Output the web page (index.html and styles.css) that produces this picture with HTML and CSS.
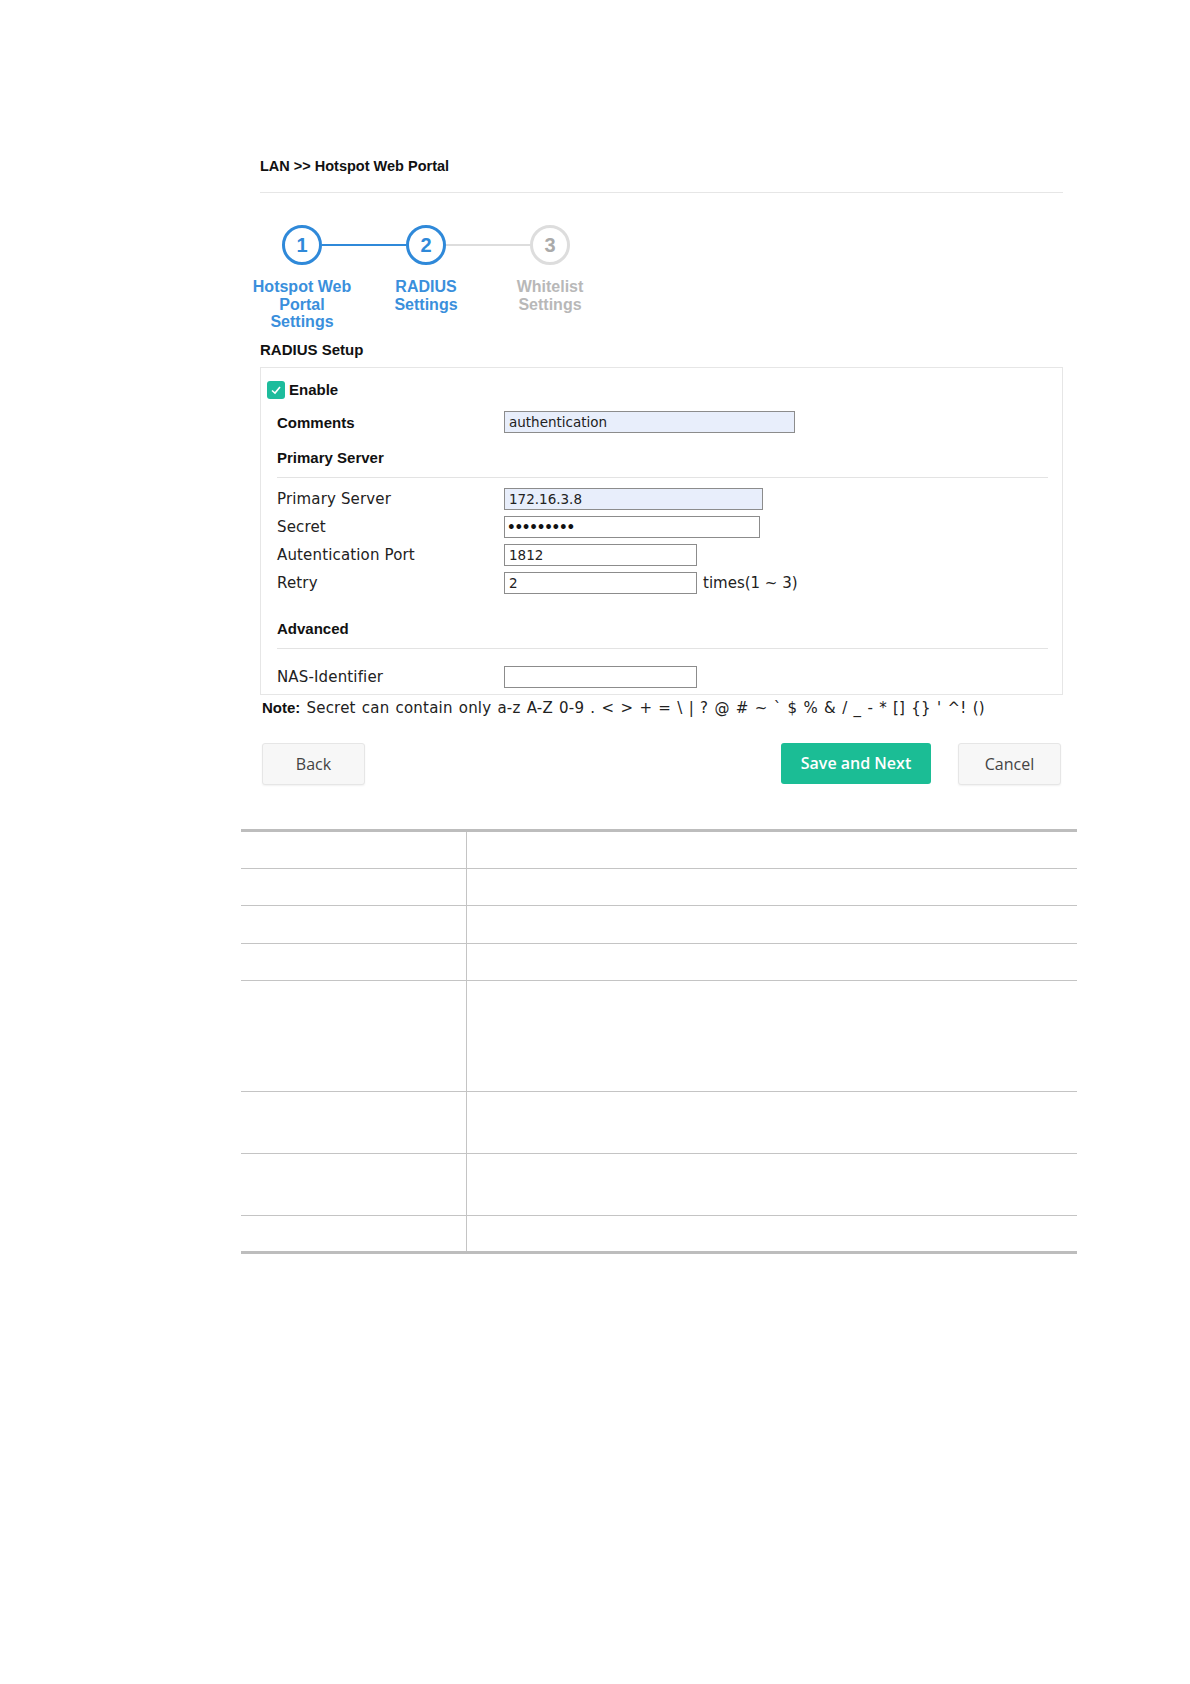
FILE: index.html
```html
<!DOCTYPE html>
<html lang="en">

<head>
    <meta charset="UTF-8">
    <meta name="viewport" content="width=device-width, initial-scale=1.0">
    <title>LAN &gt;&gt; Hotspot Web Portal</title>
    <link rel="stylesheet" href="styles.css">
</head>

<body>
    <div class="page">
        <div class="wizard">
            <h1 class="crumb">LAN &gt;&gt; Hotspot Web Portal</h1>

            <!-- Step indicator -->
            <div class="step-track">
                <span class="dot done">1</span>
                <span class="link done"></span>
                <span class="dot done">2</span>
                <span class="link"></span>
                <span class="dot">3</span>
            </div>
            <div class="step-labels">
                <span class="done">Hotspot Web<br>Portal<br>Settings</span>
                <span class="done">RADIUS<br>Settings</span>
                <span>Whitelist<br>Settings</span>
            </div>

            <h2 class="section-title">RADIUS Setup</h2>

            <div class="panel">
                <label class="row enable">
                    <span class="check">
                        <svg width="12" height="12" viewBox="0 0 12 12">
                            <polyline points="2,6.5 5,9 10,3" fill="none" stroke="#fff" stroke-width="1.6" />
                        </svg>
                    </span>
                    Enable
                </label>
                <div class="row comments">
                    <span class="label bold">Comments</span>
                    <input class="field autofill w-291" type="text" value="authentication">
                </div>

                <div class="group-title">Primary Server</div>
                <div class="row">
                    <span class="label">Primary Server</span>
                    <input class="field autofill w-259" type="text" value="172.16.3.8">
                </div>
                <div class="row">
                    <span class="label">Secret</span>
                    <input class="field secret w-256" type="password" value="secret123">
                </div>
                <div class="row">
                    <span class="label">Autentication Port</span>
                    <input class="field w-193" type="text" value="1812">
                </div>
                <div class="row">
                    <span class="label">Retry</span>
                    <input class="field w-193" type="text" value="2">
                    <span class="hint">times(1 ~ 3)</span>
                </div>

                <div class="group-title advanced">Advanced</div>
                <div class="row nas">
                    <span class="label">NAS-Identifier</span>
                    <input class="field w-193" type="text" value="">
                </div>
            </div>

            <p class="note"><strong>Note:</strong> Secret can contain only a-z A-Z 0-9 . &lt; &gt; + = \ | ? @ # ~ ` $ % &amp; / _ - * [] {} ' ^! ()</p>

            <div class="actions">
                <button class="btn btn-plain">Back</button>
                <button class="btn btn-save">Save and Next</button>
                <button class="btn btn-plain">Cancel</button>
            </div>
        </div>

        <table class="blank-table">
            <tbody>
                <tr><td></td><td></td></tr>
                <tr><td></td><td></td></tr>
                <tr class="h-38"><td></td><td></td></tr>
                <tr><td></td><td></td></tr>
                <tr class="tall"><td></td><td></td></tr>
                <tr class="mid"><td></td><td></td></tr>
                <tr class="mid"><td></td><td></td></tr>
                <tr class="last"><td></td><td></td></tr>
            </tbody>
        </table>
    </div>
</body>

</html>
```

FILE: styles.css
```css
/* Reset */
* {
    margin: 0;
    padding: 0;
    box-sizing: border-box;
}

body {
    font-family: "DejaVu Sans", Verdana, sans-serif;
    background-color: #fff;
    color: #333;
}

.page {
    width: 836px;
    margin-left: 241px;
    padding-top: 156px;
}

.wizard {
    margin: 0 14px 0 19px;
}

/* Breadcrumb */
.crumb {
    font-family: "Liberation Sans", Arial, sans-serif;
    font-size: 14.5px;
    font-weight: bold;
    line-height: 20px;
    color: #111;
    padding-bottom: 16px;
    border-bottom: 1px solid #e6e6e6;
}

/* Steps */
.step-track {
    display: flex;
    align-items: center;
    margin-top: 32px;
    padding-left: 22px;
}

.dot {
    width: 40px;
    height: 40px;
    border: 3px solid #ddd;
    border-radius: 50%;
    display: flex;
    align-items: center;
    justify-content: center;
    font-family: "Liberation Sans", Arial, sans-serif;
    font-size: 20px;
    font-weight: bold;
    color: #aaa;
}

.dot.done {
    border-color: #2f89d9;
    color: #2f89d9;
}

.link {
    width: 84px;
    height: 2px;
    background-color: #ddd;
}

.link.done {
    background-color: #2f89d9;
}

.step-labels {
    display: grid;
    grid-template-columns: repeat(3, 124px);
    margin: 13px 0 0 -20px;
    font-family: "Liberation Sans", Arial, sans-serif;
    font-size: 16px;
    font-weight: bold;
    line-height: 17.5px;
    text-align: center;
    color: #b8b8b8;
}

.step-labels .done {
    color: #3a8fdc;
}

.section-title {
    font-family: "Liberation Sans", Arial, sans-serif;
    font-size: 15px;
    font-weight: bold;
    line-height: 20px;
    color: #111;
    margin-top: 9px;
}

/* Panel */
.panel {
    margin-top: 7px;
    border: 1px solid #e6e6e6;
    padding: 7px 14px 3px 16px;
}

.row {
    display: flex;
    align-items: center;
    height: 28px;
}

.enable {
    height: 30px;
    margin-left: -10px;
    font-family: "Liberation Sans", Arial, sans-serif;
    font-size: 15px;
    font-weight: bold;
    color: #111;
}

.check {
    width: 18px;
    height: 18px;
    border-radius: 3px;
    background-color: #1dbc9c;
    display: flex;
    align-items: center;
    justify-content: center;
    margin-right: 4px;
}

.comments {
    height: 35px;
}

.label {
    width: 227px;
    flex-shrink: 0;
    font-size: 15px;
    letter-spacing: 0.15px;
    color: #222;
}

.label.bold,
.group-title {
    font-family: "Liberation Sans", Arial, sans-serif;
    font-size: 15px;
    font-weight: bold;
    letter-spacing: 0;
    color: #111;
}

.group-title {
    height: 38px;
    line-height: 36px;
    border-bottom: 1px solid #e3e3e3;
    margin-bottom: 7px;
}

.group-title.advanced {
    margin-top: 14px;
    margin-bottom: 14px;
}

.field {
    height: 22px;
    border: 1px solid #8c8c8c;
    background-color: #fff;
    padding: 0 4px;
    font-family: "DejaVu Sans", Verdana, sans-serif;
    font-size: 13.5px;
    color: #222;
    outline: none;
}

.field.autofill {
    background-color: #e8eefb;
}

.field.secret {
    padding-left: 2px;
    font-weight: bold;
    letter-spacing: -1.2px;
    color: #111;
}

.w-291 { width: 291px; }
.w-259 { width: 259px; }
.w-256 { width: 256px; }
.w-193 { width: 193px; }

.hint {
    margin-left: 6px;
    font-size: 15px;
    color: #222;
}

/* Note */
.note {
    margin-top: 3px;
    margin-left: 2px;
    font-size: 15px;
    letter-spacing: 0.2px;
    word-spacing: 1.2px;
    line-height: 20px;
    color: #222;
    white-space: nowrap;
}

.note strong {
    font-family: "Liberation Sans", Arial, sans-serif;
    font-size: 15px;
    letter-spacing: 0;
    color: #111;
}

/* Buttons */
.actions {
    display: flex;
    align-items: center;
    margin-top: 25px;
    padding: 0 2px;
}

.btn {
    font-family: "Open Sans", sans-serif;
    font-size: 16px;
    border-radius: 3px;
    cursor: pointer;
}

.btn-plain {
    width: 103px;
    height: 42px;
    background-color: #f7f7f7;
    border: 1px solid #e6e6e6;
    box-shadow: 0 1px 2px rgba(0, 0, 0, 0.06);
    color: #444;
}

.btn-save {
    width: 150px;
    height: 41px;
    margin: 0 27px 2px auto;
    background-color: #1bbd95;
    border: none;
    color: #fff;
    font-weight: 600;
}

/* Blank table */
.blank-table {
    width: 100%;
    margin-top: 43px;
    border-collapse: separate;
    border-spacing: 0;
    border-top: 3px solid #bdbdbd;
    border-bottom: 3px solid #bdbdbd;
}

.blank-table td {
    height: 37px;
    border-bottom: 1px solid #c4c4c4;
}

.blank-table td:first-child {
    width: 226px;
    border-right: 1px solid #c4c4c4;
}

.blank-table .h-38 td { height: 38px; }
.blank-table .tall td { height: 111px; }
.blank-table .mid td { height: 62px; }

.blank-table .last td {
    height: 35px;
    border-bottom: none;
}
```
